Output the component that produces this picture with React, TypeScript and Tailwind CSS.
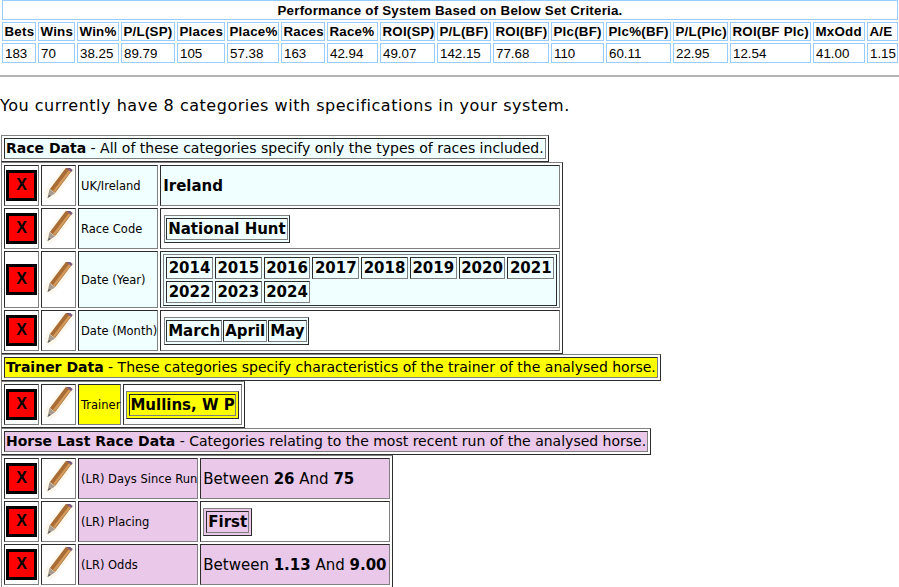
const arial = "[font-family:'Liberation_Sans',Arial,sans-serif]";
const outset = "[border-style:outset] border border-[#808080]";
const inset = "[border-style:inset] border border-[#808080]";

const head = ["Bets","Wins","Win%","P/L(SP)","Places","Place%","Races","Race%","ROI(SP)","P/L(BF)","ROI(BF)","Plc(BF)","Plc%(BF)","P/L(Plc)","ROI(BF Plc)","MxOdd","A/E"];
const vals = ["183","70","38.25","89.79","105","57.38","163","42.94","49.07","142.15","77.68","110","60.11","22.95","12.54","41.00","1.15"];

function Pencil() {
  return (
    <svg width="30" height="36" viewBox="0 3 30 36" className="block">
      <path d="M26 4 L6 29" stroke="#fdf6e6" strokeWidth="12" strokeLinecap="round" opacity="0.6" />
      <path d="M25.5 3.5 L8.5 26" stroke="#a86c34" strokeWidth="6.5" />
      <path d="M26.5 5 L10 26.5" stroke="#d39a5c" strokeWidth="2.2" />
      <path d="M23.5 2.5 L28 6" stroke="#7a5a80" strokeWidth="2.5" />
      <path d="M5.5 24 L11 28.4 L3.5 33 Z" fill="#a89a8c" />
      <path d="M3.5 33 L5 30 L6.8 31 Z" fill="#555" />
    </svg>
  );
}

function Actions() {
  return (
    <>
      <td className={`${inset} p-0 w-[35px] align-middle`}>
        <div className="flex justify-center">
          <div className={`w-[31px] h-[31px] bg-[#ff0000] border-[3px] border-black flex items-center justify-center pb-[2px] text-[16px] font-bold leading-[18px] text-black ${arial}`}>X</div>
        </div>
      </td>
      <td className={`${inset} p-0 w-[35px] align-middle`}>
        <div className="flex justify-center"><Pencil /></div>
      </td>
    </>
  );
}

function Chips({ items, bg, tableClass, pad = "px-[1px]" }: { items: string[]; bg: string; tableClass: string; pad?: string }) {
  return (
    <table className={`${outset} border-separate inline-table align-middle ${tableClass}`}>
      <tbody>
        <tr>
          {items.map((t) => (
            <td key={t} className={`${inset} ${pad} py-0 font-bold text-[15px] leading-[20px] ${bg}`}>{t}</td>
          ))}
        </tr>
      </tbody>
    </table>
  );
}

function YearChips() {
  const rows = [["2014","2015","2016","2017","2018","2019","2020","2021"],["2022","2023","2024"]];
  return (
    <table className={`${outset} border-separate [border-spacing:2px] bg-[#f0ffff]`}>
      <tbody>
        {rows.map((r, i) => (
          <tr key={i}>
            {r.map((t) => (
              <td key={t} className={`${inset} px-[1.5px] py-0 font-bold text-[15px] leading-[20px] bg-[#f0ffff]`}>{t}</td>
            ))}
          </tr>
        ))}
      </tbody>
    </table>
  );
}

function Header({ title, rest, bg }: { title: string; rest: string; bg: string }) {
  return (
    <table className={`${outset} border-separate [border-spacing:2px]`}>
      <tbody>
        <tr>
          <td className={`${inset} pl-[1px] pr-[1px] py-0 text-[14px] leading-[19px] whitespace-nowrap ${bg}`}>
            <b>{title}</b> - {rest}
          </td>
        </tr>
      </tbody>
    </table>
  );
}

function Row({ label, labelW, bg, valueBg, h, children }: { label: string; labelW: string; bg: string; valueBg: string; h: string; children: React.ReactNode }) {
  return (
    <tr className={h}>
      <Actions />
      <td className={`${inset} pl-[2px] pr-0 pt-[3px] pb-0 text-[11.5px] whitespace-nowrap ${labelW} ${bg}`}>{label}</td>
      <td className={`${inset} px-[2px] py-0 ${valueBg}`}>{children}</td>
    </tr>
  );
}

const Grid = ({ children }: { children: React.ReactNode }) => (
  <table className={`${outset} border-separate [border-spacing:2px]`}>
    <tbody>{children}</tbody>
  </table>
);

const Big = ({ children }: { children: React.ReactNode }) => <b>{children}</b>;

export default function App() {
  const azure = "bg-[#f0ffff]";
  const pink = "bg-[#e9c8e9]";
  const yellow = "bg-[#ffff00]";
  return (
    <div className="w-[899px] h-[587px] overflow-hidden bg-white text-black font-['DejaVu_Sans',Verdana,sans-serif]">
      <table className={`w-[899px] table-fixed border-separate [border-spacing:2px] -mt-[2px] text-[13.33px] leading-[15px] ${arial}`}>
        <colgroup>
          {[34,37,42,54,48,52,44,51,55,54,56,53,65,55,81,52,31].map((w, i) => <col key={i} style={{ width: w }} />)}
        </colgroup>
        <tbody>
          <tr>
            <td colSpan={17} className="border border-[#99ccff] text-center font-bold h-[20px] p-0 tracking-[0.22px]">Performance of System Based on Below Set Criteria.</td>
          </tr>
          <tr>
            {head.map((t) => <td key={t} className="border border-[#99ccff] font-bold h-[19px] py-0 pl-[1.5px] pr-0 whitespace-nowrap tracking-[0.22px]">{t}</td>)}
          </tr>
          <tr>
            {vals.map((t, i) => <td key={i} className="border border-[#99ccff] h-[20px] py-0 pl-[2px] pr-0 whitespace-nowrap">{t}</td>)}
          </tr>
        </tbody>
      </table>
      <hr className="mt-[10px] border-0 h-[2px] bg-[#b4b4b4]" />
      <p className="mt-[19px] mb-0 text-[16px] leading-[19px] tracking-[0.52px]">You currently have 8 categories with specifications in your system.</p>
      <div className="mt-[20px] ml-px flex flex-col items-start">
        <Header title="Race Data" rest="All of these categories specify only the types of races included." bg={azure} />
        <Grid>
          <Row h="h-[41px]" label="UK/Ireland" labelW="w-[80px]" bg={azure} valueBg={azure}><Big><span className="text-[15px]">Ireland</span></Big></Row>
          <Row h="h-[41px]" label="Race Code" labelW="w-[80px]" bg={azure} valueBg="bg-white"><Chips items={["National Hunt"]} bg={azure} tableClass="ml-[1px] [border-spacing:1px_2px] bg-[#f0ffff]" /></Row>
          <Row h="h-[57px]" label="Date (Year)" labelW="w-[80px]" bg={azure} valueBg={azure}><YearChips /></Row>
          <Row h="h-[41px]" label="Date (Month)" labelW="w-[80px]" bg={azure} valueBg="bg-white"><Chips items={["March","April","May"]} bg={azure} tableClass="ml-[1px] [border-spacing:1px_2px] bg-[#f0ffff]" /></Row>
        </Grid>
        <Header title="Trainer Data" rest="These categories specify characteristics of the trainer of the analysed horse." bg={yellow} />
        <Grid>
          <Row h="h-[41px]" label="Trainer" labelW="w-[43px]" bg={yellow} valueBg="bg-white"><Chips items={["Mullins, W P"]} bg={yellow} pad="px-0" tableClass="[border-spacing:2px] bg-[#ffff00]" /></Row>
        </Grid>
        <Header title="Horse Last Race Data" rest="Categories relating to the most recent run of the analysed horse." bg={pink} />
        <Grid>
          <Row h="h-[41px]" label="(LR) Days Since Run" labelW="w-[120px]" bg={pink} valueBg={pink}><span className="text-[15px]">Between <Big>26</Big> And <Big>75</Big></span></Row>
          <Row h="h-[41px]" label="(LR) Placing" labelW="w-[120px]" bg={pink} valueBg="bg-white"><Chips items={["First"]} bg={pink} tableClass="[border-spacing:2px] bg-[#e9c8e9]" /></Row>
          <Row h="h-[41px]" label="(LR) Odds" labelW="w-[120px]" bg={pink} valueBg={pink}><span className="text-[15px]">Between <Big>1.13</Big> And <Big>9.00</Big></span></Row>
        </Grid>
      </div>
    </div>
  );
}
